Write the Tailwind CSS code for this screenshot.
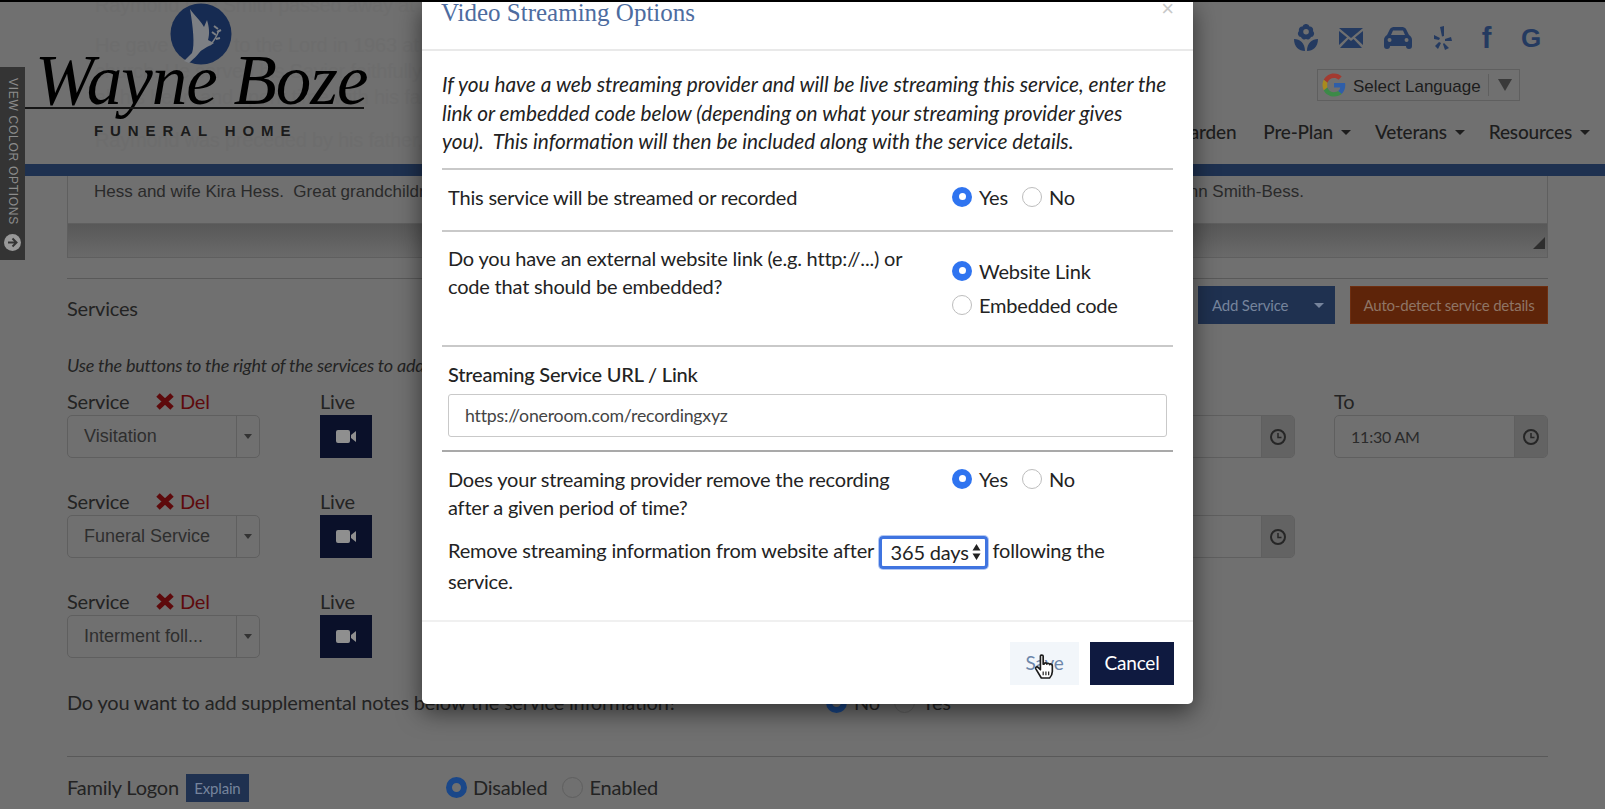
<!DOCTYPE html>
<html lang="en">

<head>
    <meta charset="UTF-8">
    <meta name="viewport" content="width=device-width, initial-scale=1.0">
    <title>Video Streaming Options</title>
    <script src="https://cdn.jsdelivr.net/npm/@tailwindcss/browser@4"></script>
</head>

<body class="bg-[#707070] font-['Lato',sans-serif] text-[#232323] tracking-[-0.2px]">
    <div class="relative w-[1605px] h-[809px] overflow-hidden">

        <!-- page behind the dialog -->
        <header class="relative h-[176px] border-b-[12px] border-[#1e3150]">
            <div class="absolute left-[95px] top-0 w-[340px] h-[160px] text-[20px] font-['Liberation_Sans',sans-serif] text-[#6d6d6d] leading-[26px]">
                <p class="whitespace-nowrap -mt-[8px]">Raymond Lee Smith passed away at the age</p>
                <p class="whitespace-nowrap mt-[14px]">He gave his life to the Lord in 1963 at the</p>
                <p class="whitespace-nowrap">church. He served his Savior faithfully with</p>
                <p class="whitespace-nowrap">all his heart and spent time with his fam</p>
                <p class="whitespace-nowrap mt-[17px]">Raymond was preceded by his father, James Pe</p>
            </div>

            <div class="absolute left-[25px] top-0 w-[345px] h-[150px]">
                <svg class="absolute left-[145px] top-[3px]" width="62" height="62" viewBox="0 0 62 62">
                    <circle cx="31" cy="31" r="30.5" fill="#162b52" />
                    <path d="M20 6 C24 12 31 18 34 24 L37 17 C39 24 40 30 38 37 L44 40 C38 44 32 46 29 50 C26 54 21 58 19 60 L14 58 L22 50 C25 42 23 24 20 6 Z" fill="#7c7f84" />
                    <path d="M40 42 C44 38 47 33 49 27" fill="none" stroke="#7c7f84" stroke-width="1.4" />
                    <path d="M46 32 l-4 -3 M47 29 l4 -2 M48 26 l-4 -3 M46 36 l4 -1" stroke="#7c7f84" stroke-width="2" />
                </svg>
                <div class="absolute left-[10px] top-[42px] font-['Liberation_Serif',serif] italic text-black text-[71px] leading-[76px] whitespace-nowrap tracking-[-1px]">Wayne Boze</div>
                <div class="absolute left-0 top-[107px] w-[339px] h-[2px] bg-[#151515]"></div>
                <div class="absolute left-[69px] top-[121px] font-['Liberation_Sans',sans-serif] font-bold text-[#1b1b1b] text-[15px] leading-[20px] tracking-[0.46em] whitespace-nowrap">FUNERAL HOME</div>
            </div>

            <div class="absolute right-[0px] top-[24px] w-[420px] flex flex-col items-end">
                <div class="flex items-center gap-[21px] pr-[63px] h-[28px] text-[#243a60]">
                    <svg width="24" height="28" viewBox="0 0 24 28" fill="currentColor">
                        <path fill-rule="evenodd" d="M12 0 A3.500 3.500 0 0 1 15.500 2.500 A3.500 3.500 0 0 1 19 7 A3.500 3.500 0 0 1 17 13 A3.500 3.500 0 0 1 12 15 A3.500 3.500 0 0 1 7 13 A3.500 3.500 0 0 1 5 7 A3.500 3.500 0 0 1 8.500 2.500 A3.500 3.500 0 0 1 12 0 Z M12 5 A2.800 2.800 0 1 0 12.100 10.600 A2.800 2.800 0 1 0 12 5 Z" />
                        <path d="M0 15 C6 15 11 19 11 27 C5 27 0 23 0 15 Z M24 15 C18 15 13 19 13 27 C19 27 24 23 24 15 Z" />
                    </svg>
                    <svg width="24" height="20" viewBox="0 0 24 20" fill="currentColor"><path d="M0 0 H24 L12 10 Z M0 3 L8 9.500 L0 17 Z M24 3 L16 9.500 L24 17 Z M9.500 11 L12 13 L14.500 11 L23 20 H1 Z" /></svg>
                    <svg width="28" height="22" viewBox="0 0 28 22" fill="currentColor"><path d="M6 2 C7 0.500 9 0 10 0 H18 C19 0 21 0.500 22 2 L25 8 C27 9 28 11 28 13 V19 C28 21 27 22 25 22 C23 22 22 21 22 19 H6 C6 21 5 22 3 22 C1 22 0 21 0 19 V13 C0 11 1 9 3 8 Z M7 8 H21 L19 3.500 H9 Z M5.500 11 A2 2 0 1 0 5.600 15 A2 2 0 1 0 5.500 11 Z M22.500 11 A2 2 0 1 0 22.600 15 A2 2 0 1 0 22.500 11 Z" fill-rule="evenodd" /></svg>
                    <svg width="20" height="24" viewBox="0 0 20 24" fill="currentColor"><path d="M7 1 L11 0 V10 L9 10.500 Z M1 9 L7 12 L6 14 L1 13 Z M2 20 L6 16 L8 17 L5 23 Z M11 17 L16 22 L12 24 L10 18 Z M12 13 L18 11 L19 15 L12 15 Z" /></svg>
                    <div class="w-[25px] text-center font-['Liberation_Sans',sans-serif] font-bold text-[29px] leading-[28px]">f</div>
                    <div class="w-[22px] text-center font-['Liberation_Sans',sans-serif] font-bold text-[26px] leading-[28px]">G</div>
                </div>
                <div class="mt-[17px] mr-[85px] w-[203px] h-[32px] border border-[#5f5f5f] flex items-center pl-[4px]">
                    <svg width="24" height="24" viewBox="0 0 48 48">
                        <path fill="#a33a30" d="M24 10c3.500 0 6.600 1.300 9 3.400l6.400-6.400C35.500 3.300 30.200 1 24 1 15 1 7.300 6.200 3.500 13.700l7.500 5.800C12.800 14 18 10 24 10z" />
                        <path fill="#2f5ea8" d="M46.500 24.500c0-1.600-.1-3.100-.4-4.500H24v9h12.700c-.6 3-2.200 5.500-4.700 7.200l7.300 5.700c4.300-4 7.200-10 7.200-17.400z" />
                        <path fill="#a98a1e" d="M11 28.500c-.5-1.400-.7-3-.7-4.500s.3-3.100.7-4.500l-7.500-5.800C2 16.800 1 20.300 1 24s1 7.200 2.500 10.300l7.500-5.800z" />
                        <path fill="#3c8a48" d="M24 47c6.200 0 11.500-2 15.300-5.100L32 36.200c-2 1.400-4.700 2.300-8 2.300-6 0-11.200-4-13-9.500l-7.500 5.800C7.300 41.800 15 47 24 47z" />
                    </svg>
                    <span class="ml-[7px] mt-[3px] font-['Liberation_Sans',sans-serif] text-[17px] tracking-normal text-[#1c1c1c] whitespace-nowrap">Select Language</span>
                    <span class="ml-[7px] w-px h-[22px] bg-[#5f5f5f]"></span>
                    <span class="ml-[9px] w-0 h-0 border-x-[7px] border-x-transparent border-t-[12px] border-t-[#3a3a3a]"></span>
                </div>
            </div>

            <nav class="absolute right-[15px] top-[119px] flex items-center text-[19px] leading-[26px] font-medium text-[#1d1d1d]">
                <span class="mr-[27px]">Garden</span>
                <span>Pre-Plan</span><span class="ml-[8px] mr-[24px] w-0 h-0 border-x-[5px] border-x-transparent border-t-[5px] border-t-[#1d1d1d]"></span>
                <span>Veterans</span><span class="ml-[8px] mr-[24px] w-0 h-0 border-x-[5px] border-x-transparent border-t-[5px] border-t-[#1d1d1d]"></span>
                <span>Resources</span><span class="ml-[8px] w-0 h-0 border-x-[5px] border-x-transparent border-t-[5px] border-t-[#1d1d1d]"></span>
            </nav>
        </header>

        <!-- color options tab -->
        <div class="absolute left-0 top-[67px] w-[25px] h-[193px] bg-[#343434] flex flex-col items-center justify-between pt-[11px] pb-[9px] text-[#8c8c8c] z-10">
            <span class="[writing-mode:vertical-rl] font-['Liberation_Sans',sans-serif] text-[12px] leading-[14px] tracking-[0.06em] whitespace-nowrap">VIEW COLOR OPTIONS</span>
            <svg width="17" height="17" viewBox="0 0 17 17">
                <circle cx="8.500" cy="8.500" r="8.500" fill="#999999" />
                <path d="M4 8.500 H12 M8.500 4.500 L12.500 8.500 L8.500 12.500" fill="none" stroke="#343434" stroke-width="2" />
            </svg>
        </div>

        <main class="ml-[67px] w-[1481px]">
            <div class="h-[82px] border-x border-b border-[#5f5f5f] flex flex-col">
                <p class="px-[26px] pt-[3px] h-[47px] font-['Liberation_Sans',sans-serif] text-[17px] tracking-normal leading-[26px] text-[#2a2a2a] whitespace-nowrap flex justify-between">
                    <span>Hess and wife Kira Hess.&nbsp; Great grandchildren</span><span class="pr-[217px]">Ann Smith-Bess.</span>
                </p>
                <div class="relative flex-1 border-t border-[#5f5f5f] bg-gradient-to-b from-[#585858] to-[#6a6a6a]">
                    <span class="absolute right-[2px] bottom-[8px] w-0 h-0 border-l-[12px] border-l-transparent border-b-[12px] border-b-[#2e2e2e]"></span>
                </div>
            </div>

            <div class="mt-[20px] border-t border-[#595959] pt-[7px] flex items-center h-[46px]">
                <h2 class="mt-[6px] text-[20px] leading-[26px]">Services</h2>
                <div class="ml-auto flex gap-[15px]">
                    <div class="w-[137px] h-[38px] bg-[#1f3150] text-[#76849c] text-[15px] flex items-center justify-between pl-[14px] pr-[11px]">
                        Add Service
                        <span class="w-0 h-0 border-x-[5px] border-x-transparent border-t-[5px] border-t-[#76849c]"></span>
                    </div>
                    <div class="w-[198px] h-[38px] bg-[#5e2409] border border-[#6e2e10] text-[#8f7565] text-[15px] flex items-center justify-center whitespace-nowrap">Auto-detect service details</div>
                </div>
            </div>

            <p class="mt-[28px] italic text-[18px] leading-[26px] whitespace-nowrap">Use the buttons to the right of the services to add</p>

            <!-- service rows -->
            <div class="mt-[10px] flex flex-col gap-[17px]">
                <div class="flex items-start">
                    <div class="w-[253px]">
                        <div class="flex items-center h-[26px] text-[20px]">
                            <span class="w-[89px]">Service</span>
                            <svg width="18" height="17" viewBox="0 0 18 17"><path d="M2 2 L16 15 M16 2 L2 15" stroke="#5e0a0c" stroke-width="5" /></svg>
                            <span class="ml-[6px] text-[#5e0a0c]">Del</span>
                        </div>
                        <div class="mt-[1px] w-[193px] h-[43px] border border-[#5f5f5f] rounded-[5px] flex items-center">
                            <span class="flex-1 pl-[16px] font-['Liberation_Sans',sans-serif] text-[18px] tracking-normal text-[#2e2e2e]">Visitation</span>
                            <span class="w-[23px] h-full border-l border-[#5f5f5f] flex items-center justify-center"><span class="w-0 h-0 border-x-[4px] border-x-transparent border-t-[5px] border-t-[#333333]"></span></span>
                        </div>
                    </div>
                    <div class="w-[52px]">
                        <div class="h-[26px] text-[20px] leading-[26px]">Live</div>
                        <div class="mt-[1px] h-[43px] bg-[#0a1029] flex items-center justify-center">
                            <svg width="20" height="13" viewBox="0 0 20 13" fill="#8f8f8f"><rect width="14" height="13" rx="2" /><path d="M15 5 L20 1 V12 L15 8 Z" /></svg>
                        </div>
                    </div>
                    <div class="ml-auto w-[214px] mt-[27px] mr-[39px] h-[43px] border border-[#5f5f5f] rounded-[5px] flex justify-end overflow-hidden">
                        <span class="w-[33px] h-full bg-[#636363] border-l border-[#5f5f5f] flex items-center justify-center">
                            <svg width="16" height="16" viewBox="0 0 16 16" fill="none" stroke="#262626" stroke-width="2"><circle cx="8" cy="8" r="7" /><path d="M8 4 V8.500 H11.500" stroke-width="1.500" /></svg>
                        </span>
                    </div>
                    <div class="w-[214px]">
                        <div class="h-[26px] text-[20px] leading-[26px]">To</div>
                        <div class="mt-[1px] h-[43px] border border-[#5f5f5f] rounded-[5px] flex items-center overflow-hidden">
                            <span class="flex-1 pl-[16px] text-[16px] text-[#2a2a2a]">11:30 AM</span>
                            <span class="w-[33px] h-full bg-[#636363] border-l border-[#5f5f5f] flex items-center justify-center">
                                <svg width="16" height="16" viewBox="0 0 16 16" fill="none" stroke="#262626" stroke-width="2"><circle cx="8" cy="8" r="7" /><path d="M8 4 V8.500 H11.500" stroke-width="1.500" /></svg>
                            </span>
                        </div>
                    </div>
                </div>

                <div class="flex items-start pt-[13px]">
                    <div class="w-[253px]">
                        <div class="flex items-center h-[26px] text-[20px]">
                            <span class="w-[89px]">Service</span>
                            <svg width="18" height="17" viewBox="0 0 18 17"><path d="M2 2 L16 15 M16 2 L2 15" stroke="#5e0a0c" stroke-width="5" /></svg>
                            <span class="ml-[6px] text-[#5e0a0c]">Del</span>
                        </div>
                        <div class="mt-[1px] w-[193px] h-[43px] border border-[#5f5f5f] rounded-[5px] flex items-center">
                            <span class="flex-1 pl-[16px] font-['Liberation_Sans',sans-serif] text-[18px] tracking-normal text-[#2e2e2e]">Funeral Service</span>
                            <span class="w-[23px] h-full border-l border-[#5f5f5f] flex items-center justify-center"><span class="w-0 h-0 border-x-[4px] border-x-transparent border-t-[5px] border-t-[#333333]"></span></span>
                        </div>
                    </div>
                    <div class="w-[52px]">
                        <div class="h-[26px] text-[20px] leading-[26px]">Live</div>
                        <div class="mt-[1px] h-[43px] bg-[#0a1029] flex items-center justify-center">
                            <svg width="20" height="13" viewBox="0 0 20 13" fill="#8f8f8f"><rect width="14" height="13" rx="2" /><path d="M15 5 L20 1 V12 L15 8 Z" /></svg>
                        </div>
                    </div>
                    <div class="ml-auto w-[214px] mt-[27px] mr-[253px] h-[43px] border border-[#5f5f5f] rounded-[5px] flex justify-end overflow-hidden">
                        <span class="w-[33px] h-full bg-[#636363] border-l border-[#5f5f5f] flex items-center justify-center">
                            <svg width="16" height="16" viewBox="0 0 16 16" fill="none" stroke="#262626" stroke-width="2"><circle cx="8" cy="8" r="7" /><path d="M8 4 V8.500 H11.500" stroke-width="1.500" /></svg>
                        </span>
                    </div>
                </div>

                <div class="flex items-start pt-[13px]">
                    <div class="w-[253px]">
                        <div class="flex items-center h-[26px] text-[20px]">
                            <span class="w-[89px]">Service</span>
                            <svg width="18" height="17" viewBox="0 0 18 17"><path d="M2 2 L16 15 M16 2 L2 15" stroke="#5e0a0c" stroke-width="5" /></svg>
                            <span class="ml-[6px] text-[#5e0a0c]">Del</span>
                        </div>
                        <div class="mt-[1px] w-[193px] h-[43px] border border-[#5f5f5f] rounded-[5px] flex items-center">
                            <span class="flex-1 pl-[16px] font-['Liberation_Sans',sans-serif] text-[18px] tracking-normal text-[#2e2e2e]">Interment foll...</span>
                            <span class="w-[23px] h-full border-l border-[#5f5f5f] flex items-center justify-center"><span class="w-0 h-0 border-x-[4px] border-x-transparent border-t-[5px] border-t-[#333333]"></span></span>
                        </div>
                    </div>
                    <div class="w-[52px]">
                        <div class="h-[26px] text-[20px] leading-[26px]">Live</div>
                        <div class="mt-[1px] h-[43px] bg-[#0a1029] flex items-center justify-center">
                            <svg width="20" height="13" viewBox="0 0 20 13" fill="#8f8f8f"><rect width="14" height="13" rx="2" /><path d="M15 5 L20 1 V12 L15 8 Z" /></svg>
                        </div>
                    </div>
                </div>
            </div>

            <div class="mt-[31px] flex items-center h-[26px] text-[20px]">
                <span class="w-[759px] whitespace-nowrap">Do you want to add supplemental notes below the service information?</span>
                <span class="w-[21px] h-[21px] rounded-full border-[6px] border-[#1a4789] bg-[#707070]"></span>
                <span class="ml-[7px]">No</span>
                <span class="ml-[14px] w-[21px] h-[21px] rounded-full border border-[#5f5f5f]"></span>
                <span class="ml-[7px]">Yes</span>
            </div>

            <div class="mt-[41px] border-t border-[#595959] pt-[15px] flex items-center h-[46px] text-[20px]">
                <span>Family Logon</span>
                <span class="ml-[7px] mt-[2px] w-[63px] h-[28px] bg-[#1f3150] text-[#76849c] text-[15px] flex items-center justify-center">Explain</span>
                <span class="ml-[197px] w-[21px] h-[21px] rounded-full border-[6px] border-[#1a4789] bg-[#707070]"></span>
                <span class="ml-[6px]">Disabled</span>
                <span class="ml-[15px] w-[21px] h-[21px] rounded-full border border-[#5f5f5f]"></span>
                <span class="ml-[6px]">Enabled</span>
            </div>
        </main>

        <!-- dialog -->
        <section class="absolute left-[422px] top-0 w-[771px] h-[704px] bg-white rounded-b-[5px] shadow-[0_8px_24px_rgba(0,0,0,0.55)] flex flex-col z-20 tracking-[-0.2px]">
            <div class="relative h-[51px] border-b-2 border-[#e9e9e9] pl-[19px]">
                <h1 class="font-['Liberation_Serif',serif] text-[25px] leading-[26px] tracking-normal text-[#4d6c9f]">Video Streaming Options</h1>
                <span class="absolute right-[19px] top-0 font-['Liberation_Sans',sans-serif] text-[22px] leading-[18px] text-[#c8c8c8]">×</span>
            </div>

            <div class="flex-1 px-[20px]">
                <p class="pt-[19px] pb-[12px] italic text-[20.8px] leading-[28.500px] tracking-normal text-[#222222] whitespace-nowrap">If you have a web streaming provider and will be live streaming this service, enter the<br>link or embedded code below (depending on what your streaming provider gives<br>you).&nbsp; This information will then be included along with the service details.</p>

                <div class="h-[62px] border-t-2 border-[#c9c9c9] flex items-center pb-[6px] pl-[6px] text-[20px]">
                    <span class="w-[504px]">This service will be streamed or recorded</span>
                    <span class="w-5 h-5 rounded-full bg-[#2f74f0] flex items-center justify-center"><span class="w-[7px] h-[7px] rounded-full bg-white"></span></span>
                    <span class="ml-[7px]">Yes</span>
                    <span class="ml-[14px] w-5 h-5 rounded-full border border-[#bdbdbd]"></span>
                    <span class="ml-[7px]">No</span>
                </div>

                <div class="h-[115px] border-t-2 border-[#c9c9c9] flex pl-[6px] text-[20px]">
                    <p class="w-[504px] pt-[12px] pr-[20px] leading-[28.500px]">Do you have an external website link (e.g. http://...) or code that should be embedded?</p>
                    <div class="pt-[26px] flex flex-col gap-[8px]">
                        <div class="flex items-center h-[26px]">
                            <span class="w-5 h-5 rounded-full bg-[#2f74f0] flex items-center justify-center"><span class="w-[7px] h-[7px] rounded-full bg-white"></span></span>
                            <span class="ml-[7px]">Website Link</span>
                        </div>
                        <div class="flex items-center h-[26px]">
                            <span class="w-5 h-5 rounded-full border border-[#bdbdbd]"></span>
                            <span class="ml-[7px]">Embedded code</span>
                        </div>
                    </div>
                </div>

                <div class="h-[107px] border-y-2 border-[#c9c9c9] px-[6px] pt-[13px] border-b-[#a9a9a9]">
                    <label class="block text-[20px] leading-[28px] font-medium">Streaming Service URL / Link</label>
                    <input class="mt-[6px] block w-[719px] h-[43px] border border-[#c9c9c9] rounded-[3px] px-[16px] text-[17.7px] text-[#444444]" value="https://oneroom.com/recordingxyz">
                </div>

                <div class="pl-[6px] text-[20px]">
                    <div class="flex pt-[13px]">
                        <p class="w-[504px] pr-[40px] leading-[28.500px]">Does your streaming provider remove the recording after a given period of time?</p>
                        <div class="flex items-center h-[28px]">
                            <span class="w-5 h-5 rounded-full bg-[#2f74f0] flex items-center justify-center"><span class="w-[7px] h-[7px] rounded-full bg-white"></span></span>
                            <span class="ml-[7px]">Yes</span>
                            <span class="ml-[14px] w-5 h-5 rounded-full border border-[#bdbdbd]"></span>
                            <span class="ml-[7px]">No</span>
                        </div>
                    </div>
                    <p class="mt-[13px] leading-[30px] pr-[40px]">Remove streaming information from website after
                        <span class="inline-flex align-middle items-center justify-between w-[109px] h-[33px] -my-[3px] border-[3px] border-[#3f74e0] rounded-[4px] pl-[9px] pr-[4px] ring-1 ring-[#3f74e0]/40">365 days
                            <svg width="9" height="18" viewBox="0 0 9 18" fill="#222222"><path d="M4.500 1 L8.500 7.500 H0.500 Z M4.500 17 L8.500 10.500 H0.500 Z" /></svg>
                        </span>
                        following the service.</p>
                </div>
            </div>

            <footer class="h-[84px] border-t-2 border-[#f0f0f0] flex justify-end items-start pt-[20px] pr-[19px] gap-[11px] text-[19px]">
                <div class="relative w-[69px] h-[43px] bg-[#f2f6fa] text-[#6d86aa] flex items-center justify-center">Save
                    <svg class="absolute left-[24px] top-[12px]" width="22" height="26" viewBox="0 0 24 28">
                        <path d="M7 2 C7 0.500 10 0.500 10 2 V11 L11 11 C11 9 14 9 14 11 C14 9.500 17 9.500 17 11.500 C17 10 20 10.500 20 12.500 V19 C20 22 18 25 17 26 H8 L2 16 C1 14 3.500 13 5 15 L7 17 Z" fill="#ffffff" stroke="#1c1c1c" stroke-width="1.800" stroke-linejoin="round" />
                        <path d="M10 19 V23 M13 19 V23 M16 19 V23" stroke="#1c1c1c" stroke-width="1.300" />
                    </svg>
                </div>
                <div class="w-[84px] h-[43px] bg-[#0f1a40] text-white flex items-center justify-center">Cancel</div>
            </footer>
        </section>

        <div class="absolute left-0 top-0 w-full h-[2px] bg-black z-30"></div>
    </div>
</body>

</html>
